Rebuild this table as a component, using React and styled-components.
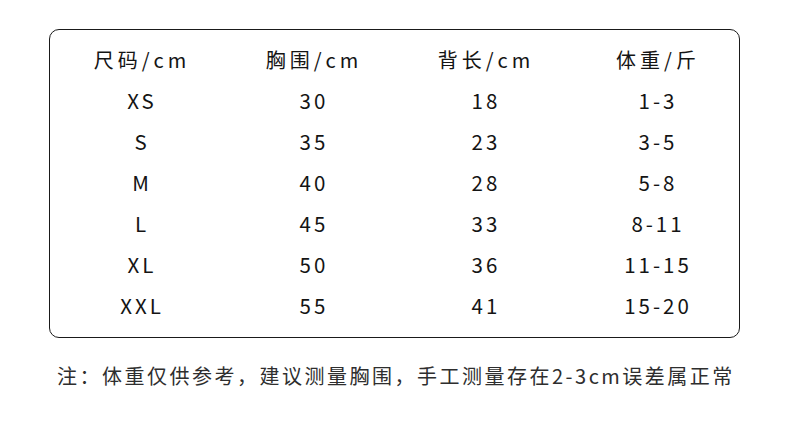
import styled, { createGlobalStyle } from 'styled-components';

const GlobalStyle = createGlobalStyle`
  html, body {
    margin: 0;
    padding: 0;
    background: #ffffff;
  }
  body {
    font-family: "Noto Sans CJK SC", "Noto Sans", sans-serif;
    color: #111111;
  }
`;

const Page = styled.div`
  width: 786px;
  height: 434px;
  padding: 29px 0 0 49px;
  box-sizing: border-box;
`;

const TableBox = styled.div`
  width: 691px;
  height: 309px;
  box-sizing: border-box;
  border: 1.5px solid #1a1a1a;
  border-radius: 10px;
  padding: 10px 0 0 6px;
`;

const Row = styled.div`
  display: grid;
  grid-template-columns: repeat(4, 172px);
  height: ${(p) => (p.$head ? 40 : 41)}px;
  align-items: center;
`;

const Cell = styled.div`
  text-align: center;
  font-size: ${(p) => (p.$head ? 20 : 20.5)}px;
  letter-spacing: ${(p) => (p.$head ? 4 : 3)}px;
  line-height: 1;
  color: #141414;
`;

const Note = styled.p`
  margin: 28px 0 0 8px;
  font-size: 20px;
  letter-spacing: 2.5px;
  line-height: 1;
  color: #2e2e2e;
  white-space: nowrap;
`;

const headers = ['尺码/cm', '胸围/cm', '背长/cm', '体重/斤'];

const rows = [
  ['XS', '30', '18', '1-3'],
  ['S', '35', '23', '3-5'],
  ['M', '40', '28', '5-8'],
  ['L', '45', '33', '8-11'],
  ['XL', '50', '36', '11-15'],
  ['XXL', '55', '41', '15-20'],
];

export default function App() {
  return (
    <>
      <GlobalStyle />
      <Page>
        <TableBox>
          <Row $head>
            {headers.map((h) => (
              <Cell $head key={h}>{h}</Cell>
            ))}
          </Row>
          {rows.map((r) => (
            <Row key={r[0]}>
              {r.map((v, i) => (
                <Cell key={i}>{v}</Cell>
              ))}
            </Row>
          ))}
        </TableBox>
        <Note>注：体重仅供参考，建议测量胸围，手工测量存在2-3cm误差属正常</Note>
      </Page>
    </>
  );
}
